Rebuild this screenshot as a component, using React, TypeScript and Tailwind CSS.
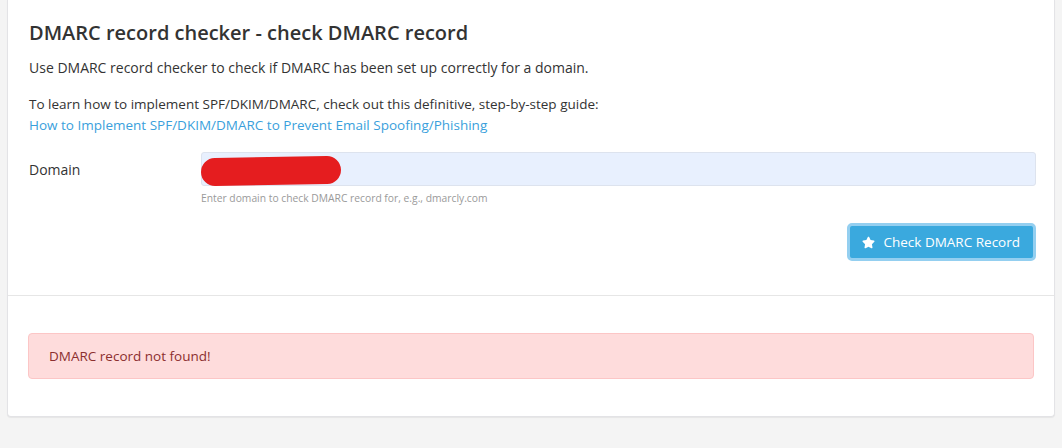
import { FaStar } from "react-icons/fa";

function App() {
  return (
    <div className="min-h-[448px] bg-[#f4f4f4] pl-[7px] pr-[7px] pt-0 font-['Open_Sans',sans-serif] text-[#333]">
      <div className="w-[1048px] rounded-b-[4px] border border-t-0 border-[#e3e3e6] bg-white shadow-[0_1px_1px_rgba(0,0,0,0.06)]">
        <div className="pl-[21px] pr-[18px] pt-[20px] pb-[34px]">
          <h1 className="text-[20px] leading-[26px] font-semibold text-[#333]">
            DMARC record checker - check DMARC record
          </h1>
          <p className="mt-[11px] text-[14px] leading-[21px]">
            Use DMARC record checker to check if DMARC has been set up correctly for a domain.
          </p>
          <p className="mt-[16px] text-[13.5px] leading-[21px]">
            To learn how to implement SPF/DKIM/DMARC, check out this definitive, step-by-step guide:
            <br />
            <a href="#" className="text-[#3a9fdc]">
              How to Implement SPF/DKIM/DMARC to Prevent Email Spoofing/Phishing
            </a>
          </p>

          <div className="mt-[16px] flex">
            <label className="w-[172px] pt-[7px] text-[14px] leading-[21px]">Domain</label>
            <div className="flex-1">
              <div className="relative h-[34px] rounded-[3px] border border-[#dde3ee] bg-[#e8f0fe]">
                <div className="absolute left-[-1px] top-[4px] h-[28px] w-[140px] -rotate-[1deg] rounded-full bg-[#e51d1f]" />
              </div>
              <p className="mt-[4px] text-[10.3px] leading-[16px] text-[#9a9a9a]">
                Enter domain to check DMARC record for, e.g., dmarcly.com
              </p>
            </div>
          </div>

          <div className="mt-[17px] flex justify-end">
            <button className="flex h-[38px] items-center gap-[8px] rounded-[5px] border-[3px] border-[#94cff0] bg-[#3aa9de] pl-[12px] pr-[13px] text-[13.5px] text-white">
              <FaStar className="text-[13px]" />
              Check DMARC Record
            </button>
          </div>
        </div>

        <div className="border-t border-[#e6e6e6] px-[20px] py-[37px]">
          <div className="flex h-[46px] items-center rounded-[4px] border border-[#fcc6c6] bg-[#fedcdc] px-[20px] text-[13.5px] text-[#8c2f2f]">
            DMARC record not found!
          </div>
        </div>
      </div>
    </div>
  );
}

export default App;
